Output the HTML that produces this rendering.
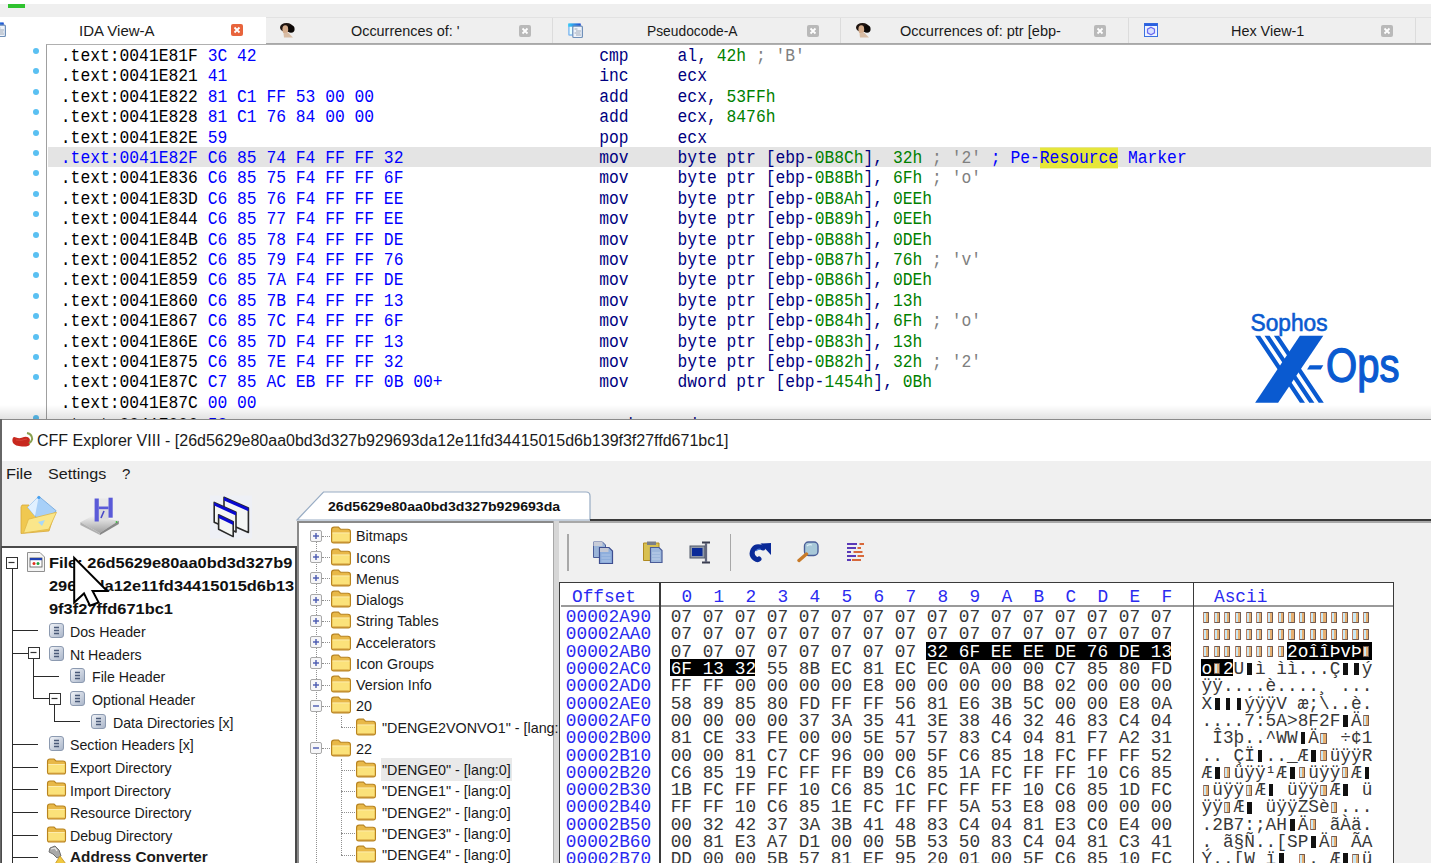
<!DOCTYPE html><html><head><meta charset="utf-8"><style>
*{margin:0;padding:0;box-sizing:border-box}
html,body{width:1431px;height:868px;overflow:hidden;background:#fff}
body{position:relative;font-family:"Liberation Sans",sans-serif;color:#000}
.a{position:absolute}
.ui{font-family:"Liberation Sans",sans-serif;font-size:15px;white-space:pre;line-height:17px}
.mono{font-family:"Liberation Mono",monospace;white-space:pre}
.code{font-size:16.32px;line-height:20.45px;transform:scaleY(1.1);transform-origin:0 15px}
.ad{color:#000}
.by{color:#0000ff}
.mn{color:#000080}
.op{color:#000080}
.nm{color:#008000}
.cm{color:#808080}
.hx{font-size:17.8px;line-height:17.25px}
</style></head><body>
<div class="a" style="left:0;top:4px;width:1431px;height:14px;background:#efefef"></div>
<div class="a" style="left:8px;top:4px;width:17px;height:4px;background:#2fc22f"></div>
<div class="a" style="left:266px;top:17px;width:1165px;height:27px;background:#efefef;border-top:1px solid #e2e2e2"></div>
<div class="a" style="left:0;top:17px;width:266px;height:27px;background:#fff"></div>
<div class="a" style="left:266px;top:43px;width:1165px;height:2px;background:#a8a8a8"></div>
<div class="a" style="left:552px;top:18px;width:1px;height:25px;background:#dcdcdc"></div>
<div class="a" style="left:840px;top:18px;width:1px;height:25px;background:#dcdcdc"></div>
<div class="a" style="left:1128px;top:18px;width:1px;height:25px;background:#dcdcdc"></div>
<div class="a" style="left:1415px;top:18px;width:1px;height:25px;background:#dcdcdc"></div>
<div class="a ui" style="left:79px;top:22px;color:#1a1a1a;transform:scaleX(1.0);transform-origin:0 0">IDA View-A</div>
<div class="a" style="left:231px;top:24px;width:12px;height:12px;border-radius:2px;background:#e8643c"><svg width="12" height="12" style="position:absolute;left:0;top:0"><path d="M3.5 3.5L8.5 8.5M8.5 3.5L3.5 8.5" stroke="#fff" stroke-width="1.8"/></svg></div>
<div class="a ui" style="left:351px;top:22px;color:#1a1a1a;transform:scaleX(0.96);transform-origin:0 0">Occurrences of: '</div>
<div class="a" style="left:519px;top:25px;width:12px;height:12px;border-radius:2px;background:#b9b9b9"><svg width="12" height="12" style="position:absolute;left:0;top:0"><path d="M3.5 3.5L8.5 8.5M8.5 3.5L3.5 8.5" stroke="#fff" stroke-width="1.8"/></svg></div>
<div class="a ui" style="left:647px;top:22px;color:#1a1a1a;transform:scaleX(0.92);transform-origin:0 0">Pseudocode-A</div>
<div class="a" style="left:807px;top:25px;width:12px;height:12px;border-radius:2px;background:#b9b9b9"><svg width="12" height="12" style="position:absolute;left:0;top:0"><path d="M3.5 3.5L8.5 8.5M8.5 3.5L3.5 8.5" stroke="#fff" stroke-width="1.8"/></svg></div>
<div class="a ui" style="left:900px;top:22px;color:#1a1a1a;transform:scaleX(0.97);transform-origin:0 0">Occurrences of: ptr [ebp-</div>
<div class="a" style="left:1094px;top:25px;width:12px;height:12px;border-radius:2px;background:#b9b9b9"><svg width="12" height="12" style="position:absolute;left:0;top:0"><path d="M3.5 3.5L8.5 8.5M8.5 3.5L3.5 8.5" stroke="#fff" stroke-width="1.8"/></svg></div>
<div class="a ui" style="left:1231px;top:22px;color:#1a1a1a;transform:scaleX(0.96);transform-origin:0 0">Hex View-1</div>
<div class="a" style="left:1381px;top:25px;width:12px;height:12px;border-radius:2px;background:#b9b9b9"><svg width="12" height="12" style="position:absolute;left:0;top:0"><path d="M3.5 3.5L8.5 8.5M8.5 3.5L3.5 8.5" stroke="#fff" stroke-width="1.8"/></svg></div>
<svg class="a" style="left:-11px;top:21px" width="18" height="17"><defs><linearGradient id="tg-11" x1="0" x2="1"><stop offset="0" stop-color="#38d0f8"/><stop offset="1" stop-color="#2048d0"/></linearGradient></defs><rect x="2.2" y="1.5" width="12.5" height="12.2" rx="1.2" fill="#80b8f0"/><rect x="2.2" y="1.5" width="12.5" height="3.2" fill="url(#tg-11)"/><rect x="3.6" y="4.8" width="2.6" height="7.5" fill="#e8ffff"/><rect x="6.8" y="4.2" width="9.6" height="11.3" rx="1" fill="#eef3fa" stroke="#7090b8" stroke-width="1.2"/><path d="M8.5 7h3M10 9h5M8.5 11h6M10 13h5" stroke="#a0aab8" stroke-width="1"/></svg>
<svg class="a" style="left:278px;top:21px" width="20" height="17"><ellipse cx="8.5" cy="6.5" rx="6.5" ry="4.6" fill="#1e1410"/><ellipse cx="13" cy="8" rx="3.6" ry="3.8" fill="#0c0806"/><ellipse cx="7.3" cy="8.5" rx="2.9" ry="4.2" fill="#d4ac8c"/><path d="M5.5 12.5 Q8 11 10.5 12 L15 16.5 H6Z" fill="#d8bca4"/></svg>
<svg class="a" style="left:566px;top:22px" width="18" height="17"><defs><linearGradient id="tg566" x1="0" x2="1"><stop offset="0" stop-color="#38d0f8"/><stop offset="1" stop-color="#2048d0"/></linearGradient></defs><rect x="2.2" y="1.5" width="12.5" height="12.2" rx="1.2" fill="#80b8f0"/><rect x="2.2" y="1.5" width="12.5" height="3.2" fill="url(#tg566)"/><rect x="3.6" y="4.8" width="2.6" height="7.5" fill="#e8ffff"/><rect x="6.8" y="4.2" width="9.6" height="11.3" rx="1" fill="#eef3fa" stroke="#7090b8" stroke-width="1.2"/><path d="M8.5 7h3M10 9h5M8.5 11h6M10 13h5" stroke="#a0aab8" stroke-width="1"/></svg>
<svg class="a" style="left:854px;top:21px" width="20" height="17"><ellipse cx="8.5" cy="6.5" rx="6.5" ry="4.6" fill="#1e1410"/><ellipse cx="13" cy="8" rx="3.6" ry="3.8" fill="#0c0806"/><ellipse cx="7.3" cy="8.5" rx="2.9" ry="4.2" fill="#d4ac8c"/><path d="M5.5 12.5 Q8 11 10.5 12 L15 16.5 H6Z" fill="#d8bca4"/></svg>
<svg class="a" style="left:1144px;top:23px" width="14" height="14"><rect x="0.5" y="0.5" width="13" height="13" fill="#eef4ff" stroke="#3a70e0"/><rect x="0.5" y="0.5" width="13" height="2.5" fill="#2a60e0"/><path d="M7 4.2 L10.5 6.2 V9.8 L7 11.8 L3.5 9.8 V6.2Z" fill="#d8e0ff" stroke="#6a6af0" stroke-width="1.2"/></svg>
<div class="a" style="left:46px;top:44px;width:1385px;height:376px;border-left:1.5px solid #a0a0a0;border-top:1px solid #b0b0b0"></div>
<div class="a" style="left:48px;top:146.8px;width:1383px;height:19.8px;background:#e4e4e4"></div>
<div class="a" style="left:33.3px;top:48.00px;width:6px;height:6px;border-radius:50%;background:#5ac0f2"></div>
<div class="a mono code" style="left:60.8px;top:47.00px"><span style="color:#000">.text:0041E81F</span> <span class="by">3C 42</span></div>
<div class="a mono code mn" style="left:599.25px;top:47.00px">cmp</div>
<div class="a mono code" style="left:677.57px;top:47.00px"><span class="op">al, </span><span class="nm">42h</span><span class="cm"> ; 'B'</span></div>
<div class="a" style="left:33.3px;top:68.40px;width:6px;height:6px;border-radius:50%;background:#5ac0f2"></div>
<div class="a mono code" style="left:60.8px;top:67.40px"><span style="color:#000">.text:0041E821</span> <span class="by">41</span></div>
<div class="a mono code mn" style="left:599.25px;top:67.40px">inc</div>
<div class="a mono code" style="left:677.57px;top:67.40px"><span class="op">ecx</span></div>
<div class="a" style="left:33.3px;top:88.80px;width:6px;height:6px;border-radius:50%;background:#5ac0f2"></div>
<div class="a mono code" style="left:60.8px;top:87.80px"><span style="color:#000">.text:0041E822</span> <span class="by">81 C1 FF 53 00 00</span></div>
<div class="a mono code mn" style="left:599.25px;top:87.80px">add</div>
<div class="a mono code" style="left:677.57px;top:87.80px"><span class="op">ecx, </span><span class="nm">53FFh</span></div>
<div class="a" style="left:33.3px;top:109.20px;width:6px;height:6px;border-radius:50%;background:#5ac0f2"></div>
<div class="a mono code" style="left:60.8px;top:108.20px"><span style="color:#000">.text:0041E828</span> <span class="by">81 C1 76 84 00 00</span></div>
<div class="a mono code mn" style="left:599.25px;top:108.20px">add</div>
<div class="a mono code" style="left:677.57px;top:108.20px"><span class="op">ecx, </span><span class="nm">8476h</span></div>
<div class="a" style="left:33.3px;top:129.60px;width:6px;height:6px;border-radius:50%;background:#5ac0f2"></div>
<div class="a mono code" style="left:60.8px;top:128.60px"><span style="color:#000">.text:0041E82E</span> <span class="by">59</span></div>
<div class="a mono code mn" style="left:599.25px;top:128.60px">pop</div>
<div class="a mono code" style="left:677.57px;top:128.60px"><span class="op">ecx</span></div>
<div class="a" style="left:33.3px;top:150.00px;width:6px;height:6px;border-radius:50%;background:#5ac0f2"></div>
<div class="a mono code" style="left:60.8px;top:149.00px"><span style="color:#0000ff">.text:0041E82F</span> <span class="by">C6 85 74 F4 FF FF 32</span></div>
<div class="a mono code mn" style="left:599.25px;top:149.00px">mov</div>
<div class="a mono code" style="left:677.57px;top:149.00px"><span class="op">byte ptr [ebp-</span><span class="nm">0B8Ch</span><span class="op">], </span><span class="nm">32h</span><span class="cm"> ; '2'</span><span class="by"> ; Pe-</span><span style="background:#e6e63a;color:#0000ff">Resource</span><span class="by"> Marker</span></div>
<div class="a" style="left:33.3px;top:170.40px;width:6px;height:6px;border-radius:50%;background:#5ac0f2"></div>
<div class="a mono code" style="left:60.8px;top:169.40px"><span style="color:#000">.text:0041E836</span> <span class="by">C6 85 75 F4 FF FF 6F</span></div>
<div class="a mono code mn" style="left:599.25px;top:169.40px">mov</div>
<div class="a mono code" style="left:677.57px;top:169.40px"><span class="op">byte ptr [ebp-</span><span class="nm">0B8Bh</span><span class="op">], </span><span class="nm">6Fh</span><span class="cm"> ; 'o'</span></div>
<div class="a" style="left:33.3px;top:190.80px;width:6px;height:6px;border-radius:50%;background:#5ac0f2"></div>
<div class="a mono code" style="left:60.8px;top:189.80px"><span style="color:#000">.text:0041E83D</span> <span class="by">C6 85 76 F4 FF FF EE</span></div>
<div class="a mono code mn" style="left:599.25px;top:189.80px">mov</div>
<div class="a mono code" style="left:677.57px;top:189.80px"><span class="op">byte ptr [ebp-</span><span class="nm">0B8Ah</span><span class="op">], </span><span class="nm">0EEh</span></div>
<div class="a" style="left:33.3px;top:211.20px;width:6px;height:6px;border-radius:50%;background:#5ac0f2"></div>
<div class="a mono code" style="left:60.8px;top:210.20px"><span style="color:#000">.text:0041E844</span> <span class="by">C6 85 77 F4 FF FF EE</span></div>
<div class="a mono code mn" style="left:599.25px;top:210.20px">mov</div>
<div class="a mono code" style="left:677.57px;top:210.20px"><span class="op">byte ptr [ebp-</span><span class="nm">0B89h</span><span class="op">], </span><span class="nm">0EEh</span></div>
<div class="a" style="left:33.3px;top:231.60px;width:6px;height:6px;border-radius:50%;background:#5ac0f2"></div>
<div class="a mono code" style="left:60.8px;top:230.60px"><span style="color:#000">.text:0041E84B</span> <span class="by">C6 85 78 F4 FF FF DE</span></div>
<div class="a mono code mn" style="left:599.25px;top:230.60px">mov</div>
<div class="a mono code" style="left:677.57px;top:230.60px"><span class="op">byte ptr [ebp-</span><span class="nm">0B88h</span><span class="op">], </span><span class="nm">0DEh</span></div>
<div class="a" style="left:33.3px;top:252.00px;width:6px;height:6px;border-radius:50%;background:#5ac0f2"></div>
<div class="a mono code" style="left:60.8px;top:251.00px"><span style="color:#000">.text:0041E852</span> <span class="by">C6 85 79 F4 FF FF 76</span></div>
<div class="a mono code mn" style="left:599.25px;top:251.00px">mov</div>
<div class="a mono code" style="left:677.57px;top:251.00px"><span class="op">byte ptr [ebp-</span><span class="nm">0B87h</span><span class="op">], </span><span class="nm">76h</span><span class="cm"> ; 'v'</span></div>
<div class="a" style="left:33.3px;top:272.40px;width:6px;height:6px;border-radius:50%;background:#5ac0f2"></div>
<div class="a mono code" style="left:60.8px;top:271.40px"><span style="color:#000">.text:0041E859</span> <span class="by">C6 85 7A F4 FF FF DE</span></div>
<div class="a mono code mn" style="left:599.25px;top:271.40px">mov</div>
<div class="a mono code" style="left:677.57px;top:271.40px"><span class="op">byte ptr [ebp-</span><span class="nm">0B86h</span><span class="op">], </span><span class="nm">0DEh</span></div>
<div class="a" style="left:33.3px;top:292.80px;width:6px;height:6px;border-radius:50%;background:#5ac0f2"></div>
<div class="a mono code" style="left:60.8px;top:291.80px"><span style="color:#000">.text:0041E860</span> <span class="by">C6 85 7B F4 FF FF 13</span></div>
<div class="a mono code mn" style="left:599.25px;top:291.80px">mov</div>
<div class="a mono code" style="left:677.57px;top:291.80px"><span class="op">byte ptr [ebp-</span><span class="nm">0B85h</span><span class="op">], </span><span class="nm">13h</span></div>
<div class="a" style="left:33.3px;top:313.20px;width:6px;height:6px;border-radius:50%;background:#5ac0f2"></div>
<div class="a mono code" style="left:60.8px;top:312.20px"><span style="color:#000">.text:0041E867</span> <span class="by">C6 85 7C F4 FF FF 6F</span></div>
<div class="a mono code mn" style="left:599.25px;top:312.20px">mov</div>
<div class="a mono code" style="left:677.57px;top:312.20px"><span class="op">byte ptr [ebp-</span><span class="nm">0B84h</span><span class="op">], </span><span class="nm">6Fh</span><span class="cm"> ; 'o'</span></div>
<div class="a" style="left:33.3px;top:333.60px;width:6px;height:6px;border-radius:50%;background:#5ac0f2"></div>
<div class="a mono code" style="left:60.8px;top:332.60px"><span style="color:#000">.text:0041E86E</span> <span class="by">C6 85 7D F4 FF FF 13</span></div>
<div class="a mono code mn" style="left:599.25px;top:332.60px">mov</div>
<div class="a mono code" style="left:677.57px;top:332.60px"><span class="op">byte ptr [ebp-</span><span class="nm">0B83h</span><span class="op">], </span><span class="nm">13h</span></div>
<div class="a" style="left:33.3px;top:354.00px;width:6px;height:6px;border-radius:50%;background:#5ac0f2"></div>
<div class="a mono code" style="left:60.8px;top:353.00px"><span style="color:#000">.text:0041E875</span> <span class="by">C6 85 7E F4 FF FF 32</span></div>
<div class="a mono code mn" style="left:599.25px;top:353.00px">mov</div>
<div class="a mono code" style="left:677.57px;top:353.00px"><span class="op">byte ptr [ebp-</span><span class="nm">0B82h</span><span class="op">], </span><span class="nm">32h</span><span class="cm"> ; '2'</span></div>
<div class="a" style="left:33.3px;top:374.40px;width:6px;height:6px;border-radius:50%;background:#5ac0f2"></div>
<div class="a mono code" style="left:60.8px;top:373.40px"><span style="color:#000">.text:0041E87C</span> <span class="by">C7 85 AC EB FF FF 0B 00+</span></div>
<div class="a mono code mn" style="left:599.25px;top:373.40px">mov</div>
<div class="a mono code" style="left:677.57px;top:373.40px"><span class="op">dword ptr [ebp-</span><span class="nm">1454h</span><span class="op">], </span><span class="nm">0Bh</span></div>
<div class="a mono code" style="left:60.8px;top:393.80px"><span style="color:#000">.text:0041E87C</span> <span class="by">00 00</span></div>
<div class="a" style="left:33.3px;top:415.20px;width:6px;height:6px;border-radius:50%;background:#5ac0f2"></div>
<div class="a mono code" style="left:60.8px;top:415.70px"><span style="color:#000">.text:0041E886</span> <span class="by">53</span></div>
<div class="a mono code mn" style="left:599.25px;top:415.70px">push</div>
<div class="a mono code" style="left:677.57px;top:415.70px"><span class="op">edx</span></div>
<div class="a" style="left:0;top:405px;width:1431px;height:14.5px;background:linear-gradient(to bottom,rgba(0,0,0,0),rgba(0,0,0,0.12))"></div>
<div class="a" style="left:0;top:419px;width:1431px;height:444px;background:#fff;border-top:1px solid #8a8a8a"></div>
<div class="a" style="left:0;top:419px;width:1.5px;height:444px;background:#666"></div>
<svg class="a" style="left:10px;top:430px" width="24" height="20"><path d="M2.5 9 Q3 6 6 7.5 Q10 9 14 7 Q18 6 19.8 9 L19.8 14.5 Q18.5 17 12 16.5 Q5 16 3 13 Q2 11 2.5 9Z" fill="#c8281e"/><path d="M6 10 Q11 11 17 9" stroke="#e05a4a" stroke-width="1" fill="none" opacity="0.6"/><path d="M17 3 Q22 4 22.2 9 Q21.5 12 19 13.5" stroke="#8aa050" stroke-width="2" fill="none"/></svg>
<div class="a ui" style="left:37px;top:431px;font-size:16px;color:#1a1a1a;line-height:19px">CFF Explorer VIII - [26d5629e80aa0bd3d327b929693da12e11fd34415015d6b139f3f27ffd671bc1]</div>
<div class="a" style="left:1.5px;top:461px;width:1430px;height:402px;background:#f0f0f0"></div>
<div class="a ui" style="left:6px;top:465px;color:#1a1a1a;transform:scaleX(1.09);transform-origin:0 0">File</div>
<div class="a ui" style="left:48px;top:465px;color:#1a1a1a;display:inline-block;transform:scaleX(1.075);transform-origin:0 0">Settings</div>
<div class="a ui" style="left:122px;top:465px;color:#1a1a1a">?</div>
<svg class="a" style="left:19px;top:494px" width="40" height="42"><path d="M2 13 L2 39.5 L30 37 L36 18 L12 14 L10 11 L3 11Z" fill="#f0c850" stroke="#d8a838" stroke-width="0.8"/><path d="M19.8 2.2 L37.2 16.8 L22.9 29.8 L8.7 13.3Z" fill="#a8d0f8" stroke="#80b0e0"/><path d="M19.8 2.2 L8.7 13.3 L16 22Z" fill="#e0f0ff"/><circle cx="19.8" cy="3.5" r="1.6" fill="#48a0f0"/><path d="M4.5 39 L9.5 25.2 L37.5 18.3 L29.8 35.2Z" fill="#fae68a" stroke="#e0b848" stroke-width="0.8"/><path d="M19 28 L26 26 L23 32Z" fill="#a8d8f8"/></svg>
<svg class="a" style="left:79px;top:496px" width="42" height="40"><defs><linearGradient id="dg" x1="0" y1="0" x2="0" y2="1"><stop offset="0" stop-color="#f0f0f0"/><stop offset="1" stop-color="#a0a0a0"/></linearGradient></defs><path d="M1.4 26.3 L13 20 L39.8 24.8 L20.6 37Z" fill="url(#dg)"/><path d="M20.6 37 L39.8 24.8 L39.8 28 L21 39Z" fill="#888"/><path d="M1.4 26.3 L1.4 29 L21 39 L20.6 37Z" fill="#b0b0b0"/><rect x="19.8" y="2.5" width="9.7" height="8" fill="#e8e8e8"/><rect x="19.8" y="13.2" width="9.7" height="10" fill="#dcdcdc"/><path d="M22 22 L25 15" stroke="#4848c8" stroke-width="1.6"/><rect x="15.6" y="2.5" width="4.2" height="23" fill="#5a5ad8"/><rect x="29.5" y="1.7" width="4.2" height="20" fill="#5a5ad8"/><rect x="19.8" y="10.5" width="9.7" height="2.7" fill="#5a5ad8"/><circle cx="37.5" cy="26" r="0.9" fill="#40c040"/></svg>
<svg class="a" style="left:210px;top:495px" width="42" height="44"><rect x="0" y="0.5" width="42" height="43" fill="#eef0f6"/><path d="M14 2.3 L38.4 13 L38.4 37.5 L14 26.7Z" fill="#f4f6f4" stroke="#2a2a2a" stroke-width="1.6" stroke-linejoin="round"/><path d="M14 2.3 L38.4 13 L38.4 16.2 L14 5.5Z" fill="#0a0ad0"/><path d="M4.2 7.4 L26 17.2 L26 37.1 L4.2 27.3Z" fill="#f4f6f4" stroke="#2a2a2a" stroke-width="1.6" stroke-linejoin="round"/><path d="M4.2 7.4 L26 17.2 L26 20.4 L4.2 10.600000000000001Z" fill="#0a0ad0"/><path d="M8.6 19.7 L23.2 26.7 L23.2 41.6 L8.6 34.3Z" fill="#f4f6f4" stroke="#2a2a2a" stroke-width="1.6" stroke-linejoin="round"/><path d="M8.6 19.7 L23.2 26.7 L23.2 29.9 L8.6 22.9Z" fill="#0a0ad0"/></svg>
<div class="a" style="left:1px;top:545.5px;width:296px;height:318px;background:#fff;border-top:2px solid #4a4a4a;border-right:2px solid #4a4a4a;border-left:1.5px solid #4a4a4a"></div>
<svg class="a" style="left:6px;top:557px" width="12" height="12"><rect x="0.5" y="0.5" width="11" height="11" fill="#fff" stroke="#333"/><path d="M2.5 5.5h6" stroke="#333" stroke-width="1.2"/></svg>
<svg class="a" style="left:26px;top:551px" width="20" height="22"><path d="M1.5 1.5 H14 L18.5 6 V20.5 H1.5Z" fill="#f4f4f4" stroke="#909090"/><rect x="4" y="7" width="12" height="9" fill="#fff" stroke="#555" stroke-width="0.8"/><rect x="4" y="7" width="12" height="2.2" fill="#2040b0"/><circle cx="8" cy="12.5" r="1.5" fill="#e03020"/><circle cx="12" cy="12.5" r="1.5" fill="#20a040"/></svg>
<div class="a" style="left:0;top:547px;width:294px;height:80px;overflow:hidden">
<div class="a ui" style="left:49px;top:7.3px;font-weight:bold;color:#101010;transform:scaleX(1.093);transform-origin:0 0">File: 26d5629e80aa0bd3d327b9</div>
<div class="a ui" style="left:49px;top:30.0px;font-weight:bold;color:#101010;transform:scaleX(1.093);transform-origin:0 0">29693da12e11fd34415015d6b13</div>
<div class="a ui" style="left:49px;top:52.7px;font-weight:bold;color:#101010;transform:scaleX(1.093);transform-origin:0 0">9f3f27ffd671bc1</div>
</div>
<svg class="a" style="left:70px;top:554px;z-index:5" width="42" height="56"><path d="M4.2 3.9 V48.4 L14 39.4 L20 51.8 L28.6 48.4 L22.6 37 H37.2Z" fill="#fff" stroke="#000" stroke-width="2" stroke-linejoin="miter"/></svg>
<div class="a" style="left:12px;top:568px;width:1px;height:295px;background:#2a2a2a"></div>
<div class="a" style="left:12px;top:630px;width:26px;height:1px;background:#2a2a2a"></div>
<svg class="a" style="left:48.5px;top:622.9px" width="15" height="15"><defs><linearGradient id="hg" x1="0" y1="0" x2="1" y2="1"><stop offset="0" stop-color="#f4f6fa"/><stop offset="1" stop-color="#a8b4c8"/></linearGradient></defs><rect x="0.5" y="0.5" width="14" height="14" rx="2.5" fill="url(#hg)" stroke="#8c9ab0"/><path d="M5 4.5h5M5 7.5h5M5 10.5h5" stroke="#4a5a78" stroke-width="1.3"/></svg>
<div class="a ui" style="left:70.0px;top:622.8px;color:#1a1a1a;transform:scaleX(0.945);transform-origin:0 0">Dos Header</div>
<div class="a" style="left:12px;top:653px;width:16px;height:1px;background:#2a2a2a"></div>
<svg class="a" style="left:27.5px;top:647.3000000000001px" width="12" height="12"><rect x="0.5" y="0.5" width="11" height="11" fill="#fff" stroke="#333"/><path d="M2.5 5.5h6" stroke="#333" stroke-width="1.2"/></svg>
<svg class="a" style="left:48.5px;top:645.6px" width="15" height="15"><defs><linearGradient id="hg" x1="0" y1="0" x2="1" y2="1"><stop offset="0" stop-color="#f4f6fa"/><stop offset="1" stop-color="#a8b4c8"/></linearGradient></defs><rect x="0.5" y="0.5" width="14" height="14" rx="2.5" fill="url(#hg)" stroke="#8c9ab0"/><path d="M5 4.5h5M5 7.5h5M5 10.5h5" stroke="#4a5a78" stroke-width="1.3"/></svg>
<div class="a ui" style="left:70.0px;top:645.5px;color:#1a1a1a;transform:scaleX(0.945);transform-origin:0 0">Nt Headers</div>
<div class="a" style="left:33px;top:676px;width:26px;height:1px;background:#2a2a2a"></div>
<svg class="a" style="left:69.5px;top:668.3px" width="15" height="15"><defs><linearGradient id="hg" x1="0" y1="0" x2="1" y2="1"><stop offset="0" stop-color="#f4f6fa"/><stop offset="1" stop-color="#a8b4c8"/></linearGradient></defs><rect x="0.5" y="0.5" width="14" height="14" rx="2.5" fill="url(#hg)" stroke="#8c9ab0"/><path d="M5 4.5h5M5 7.5h5M5 10.5h5" stroke="#4a5a78" stroke-width="1.3"/></svg>
<div class="a ui" style="left:91.5px;top:668.2px;color:#1a1a1a;transform:scaleX(0.945);transform-origin:0 0">File Header</div>
<div class="a" style="left:33px;top:698px;width:16px;height:1px;background:#2a2a2a"></div>
<svg class="a" style="left:48.5px;top:692.7px" width="12" height="12"><rect x="0.5" y="0.5" width="11" height="11" fill="#fff" stroke="#333"/><path d="M2.5 5.5h6" stroke="#333" stroke-width="1.2"/></svg>
<svg class="a" style="left:69.5px;top:691.0px" width="15" height="15"><defs><linearGradient id="hg" x1="0" y1="0" x2="1" y2="1"><stop offset="0" stop-color="#f4f6fa"/><stop offset="1" stop-color="#a8b4c8"/></linearGradient></defs><rect x="0.5" y="0.5" width="14" height="14" rx="2.5" fill="url(#hg)" stroke="#8c9ab0"/><path d="M5 4.5h5M5 7.5h5M5 10.5h5" stroke="#4a5a78" stroke-width="1.3"/></svg>
<div class="a ui" style="left:91.5px;top:690.9px;color:#1a1a1a;transform:scaleX(0.945);transform-origin:0 0">Optional Header</div>
<div class="a" style="left:54px;top:721px;width:26px;height:1px;background:#2a2a2a"></div>
<svg class="a" style="left:90.5px;top:713.6999999999999px" width="15" height="15"><defs><linearGradient id="hg" x1="0" y1="0" x2="1" y2="1"><stop offset="0" stop-color="#f4f6fa"/><stop offset="1" stop-color="#a8b4c8"/></linearGradient></defs><rect x="0.5" y="0.5" width="14" height="14" rx="2.5" fill="url(#hg)" stroke="#8c9ab0"/><path d="M5 4.5h5M5 7.5h5M5 10.5h5" stroke="#4a5a78" stroke-width="1.3"/></svg>
<div class="a ui" style="left:113.0px;top:713.6px;color:#1a1a1a;transform:scaleX(0.945);transform-origin:0 0">Data Directories [x]</div>
<div class="a" style="left:12px;top:744px;width:26px;height:1px;background:#2a2a2a"></div>
<svg class="a" style="left:48.5px;top:736.4px" width="15" height="15"><defs><linearGradient id="hg" x1="0" y1="0" x2="1" y2="1"><stop offset="0" stop-color="#f4f6fa"/><stop offset="1" stop-color="#a8b4c8"/></linearGradient></defs><rect x="0.5" y="0.5" width="14" height="14" rx="2.5" fill="url(#hg)" stroke="#8c9ab0"/><path d="M5 4.5h5M5 7.5h5M5 10.5h5" stroke="#4a5a78" stroke-width="1.3"/></svg>
<div class="a ui" style="left:70.0px;top:736.3px;color:#1a1a1a;transform:scaleX(0.945);transform-origin:0 0">Section Headers [x]</div>
<div class="a" style="left:12px;top:767px;width:26px;height:1px;background:#2a2a2a"></div>
<svg class="a" style="left:46.0px;top:757.5999999999999px" width="21" height="17" viewBox="0 0 21 17"><path d="M1.5 3.5 Q1.5 1 4 1 L8 1 L10 3 L17 3 Q19.5 3 19.5 5.5 L19.5 14 Q19.5 16 17.5 16 L3.5 16 Q1.5 16 1.5 14Z" fill="#e8b848" stroke="#b88420" stroke-width="1.1"/><path d="M2.3 6.5 L18.7 6.5 L18.7 14 Q18.7 15.2 17.5 15.2 L3.5 15.2 Q2.3 15.2 2.3 14Z" fill="#fbe27a"/><path d="M2.3 6.5 L18.7 6.5" stroke="#fff4c0" stroke-width="0.8"/><path d="M3 15.2 H18" stroke="#c89030" stroke-width="0.9"/></svg>
<div class="a ui" style="left:70.0px;top:759.0px;color:#1a1a1a;transform:scaleX(0.945);transform-origin:0 0">Export Directory</div>
<div class="a" style="left:12px;top:789px;width:26px;height:1px;background:#2a2a2a"></div>
<svg class="a" style="left:46.0px;top:780.3px" width="21" height="17" viewBox="0 0 21 17"><path d="M1.5 3.5 Q1.5 1 4 1 L8 1 L10 3 L17 3 Q19.5 3 19.5 5.5 L19.5 14 Q19.5 16 17.5 16 L3.5 16 Q1.5 16 1.5 14Z" fill="#e8b848" stroke="#b88420" stroke-width="1.1"/><path d="M2.3 6.5 L18.7 6.5 L18.7 14 Q18.7 15.2 17.5 15.2 L3.5 15.2 Q2.3 15.2 2.3 14Z" fill="#fbe27a"/><path d="M2.3 6.5 L18.7 6.5" stroke="#fff4c0" stroke-width="0.8"/><path d="M3 15.2 H18" stroke="#c89030" stroke-width="0.9"/></svg>
<div class="a ui" style="left:70.0px;top:781.7px;color:#1a1a1a;transform:scaleX(0.945);transform-origin:0 0">Import Directory</div>
<div class="a" style="left:12px;top:812px;width:26px;height:1px;background:#2a2a2a"></div>
<svg class="a" style="left:46.0px;top:803.0px" width="21" height="17" viewBox="0 0 21 17"><path d="M1.5 3.5 Q1.5 1 4 1 L8 1 L10 3 L17 3 Q19.5 3 19.5 5.5 L19.5 14 Q19.5 16 17.5 16 L3.5 16 Q1.5 16 1.5 14Z" fill="#e8b848" stroke="#b88420" stroke-width="1.1"/><path d="M2.3 6.5 L18.7 6.5 L18.7 14 Q18.7 15.2 17.5 15.2 L3.5 15.2 Q2.3 15.2 2.3 14Z" fill="#fbe27a"/><path d="M2.3 6.5 L18.7 6.5" stroke="#fff4c0" stroke-width="0.8"/><path d="M3 15.2 H18" stroke="#c89030" stroke-width="0.9"/></svg>
<div class="a ui" style="left:70.0px;top:804.4px;color:#1a1a1a;transform:scaleX(0.945);transform-origin:0 0">Resource Directory</div>
<div class="a" style="left:12px;top:835px;width:26px;height:1px;background:#2a2a2a"></div>
<svg class="a" style="left:46.0px;top:825.6999999999999px" width="21" height="17" viewBox="0 0 21 17"><path d="M1.5 3.5 Q1.5 1 4 1 L8 1 L10 3 L17 3 Q19.5 3 19.5 5.5 L19.5 14 Q19.5 16 17.5 16 L3.5 16 Q1.5 16 1.5 14Z" fill="#e8b848" stroke="#b88420" stroke-width="1.1"/><path d="M2.3 6.5 L18.7 6.5 L18.7 14 Q18.7 15.2 17.5 15.2 L3.5 15.2 Q2.3 15.2 2.3 14Z" fill="#fbe27a"/><path d="M2.3 6.5 L18.7 6.5" stroke="#fff4c0" stroke-width="0.8"/><path d="M3 15.2 H18" stroke="#c89030" stroke-width="0.9"/></svg>
<div class="a ui" style="left:70.0px;top:827.1px;color:#1a1a1a;transform:scaleX(0.945);transform-origin:0 0">Debug Directory</div>
<div class="a" style="left:12px;top:857px;width:26px;height:1px;background:#2a2a2a"></div>
<svg class="a" style="left:45.5px;top:845.4px" width="22" height="20"><path d="M4 3 L9 1 L13 5 L15 11 L11 13 L7 9 L3 7Z" fill="#a8a8a8" stroke="#707070" stroke-width="1"/><path d="M5 4 L9 3 L11 6" stroke="#e8e8e8" stroke-width="1.2" fill="none"/><path d="M9 19 L14 11 L20 19Z" fill="#f0c840" stroke="#c09020" stroke-width="0.8"/></svg>
<div class="a ui" style="left:70.0px;top:847.8px;color:#1a1a1a;font-weight:bold;transform:scaleX(1.02);transform-origin:0 0">Address Converter</div>
<div class="a" style="left:33px;top:659px;width:1px;height:39px;background:#2a2a2a"></div>
<div class="a" style="left:54px;top:704px;width:1px;height:17px;background:#2a2a2a"></div>
<svg class="a" style="left:296px;top:491px" width="300" height="32"><path d="M1 29 L27.5 1 H290 Q294 1 294 5 V29Z" fill="#fff" stroke="#98acc4" stroke-width="1.2"/></svg>
<div class="a ui" style="left:327.5px;top:498.5px;font-size:12.6px;font-weight:bold;color:#101010;transform:scaleX(1.12);transform-origin:0 0">26d5629e80aa0bd3d327b929693da</div>
<div class="a" style="left:590px;top:518.5px;width:841px;height:2px;background:#3a3a3a"></div>
<div class="a" style="left:553px;top:520.5px;width:878px;height:2px;background:#a8a8a8"></div>
<div class="a" style="left:297px;top:521px;width:256.5px;height:342px;background:#fff;border-top:2px solid #8a8a8a;border-left:2px solid #8a8a8a"></div>
<div class="a" style="left:553px;top:521px;width:6px;height:342px;background:#d6d6d6;border-left:1px solid #a8a8a8"></div>
<div class="a" style="left:315.5px;top:542px;width:0;height:321px;border-left:1px dotted #909090"></div>
<div class="a" style="left:341px;top:716px;width:0;height:11px;border-left:1px dotted #909090"></div>
<div class="a" style="left:341px;top:759px;width:0;height:96px;border-left:1px dotted #909090"></div>
<div class="a" style="left:381px;top:758px;width:131px;height:22.7px;background:#e9e9e9"></div>
<svg class="a" style="left:310px;top:529.8px" width="12" height="12"><rect x="0.5" y="0.5" width="11" height="11" rx="1.5" fill="#f6f6f8" stroke="#a8a8a8"/><path d="M3 6h6" stroke="#4a5ab0" stroke-width="1.4"/><path d="M6 3v6" stroke="#4a5ab0" stroke-width="1.4"/></svg>
<div class="a" style="left:322px;top:535.8px;width:8px;height:0;border-top:1px dotted #909090"></div>
<svg class="a" style="left:329.5px;top:526.3px" width="22" height="18" viewBox="0 0 21 17"><path d="M1.5 3.5 Q1.5 1 4 1 L8 1 L10 3 L17 3 Q19.5 3 19.5 5.5 L19.5 14 Q19.5 16 17.5 16 L3.5 16 Q1.5 16 1.5 14Z" fill="#e8b848" stroke="#b88420" stroke-width="1.1"/><path d="M2.3 6.5 L18.7 6.5 L18.7 14 Q18.7 15.2 17.5 15.2 L3.5 15.2 Q2.3 15.2 2.3 14Z" fill="#fbe27a"/><path d="M2.3 6.5 L18.7 6.5" stroke="#fff4c0" stroke-width="0.8"/><path d="M3 15.2 H18" stroke="#c89030" stroke-width="0.9"/></svg>
<div class="a ui" style="left:356px;top:527.4px;color:#1a1a1a;transform:scaleX(0.955);transform-origin:0 0">Bitmaps</div>
<svg class="a" style="left:310px;top:551.05px" width="12" height="12"><rect x="0.5" y="0.5" width="11" height="11" rx="1.5" fill="#f6f6f8" stroke="#a8a8a8"/><path d="M3 6h6" stroke="#4a5ab0" stroke-width="1.4"/><path d="M6 3v6" stroke="#4a5ab0" stroke-width="1.4"/></svg>
<div class="a" style="left:322px;top:557.0px;width:8px;height:0;border-top:1px dotted #909090"></div>
<svg class="a" style="left:329.5px;top:547.55px" width="22" height="18" viewBox="0 0 21 17"><path d="M1.5 3.5 Q1.5 1 4 1 L8 1 L10 3 L17 3 Q19.5 3 19.5 5.5 L19.5 14 Q19.5 16 17.5 16 L3.5 16 Q1.5 16 1.5 14Z" fill="#e8b848" stroke="#b88420" stroke-width="1.1"/><path d="M2.3 6.5 L18.7 6.5 L18.7 14 Q18.7 15.2 17.5 15.2 L3.5 15.2 Q2.3 15.2 2.3 14Z" fill="#fbe27a"/><path d="M2.3 6.5 L18.7 6.5" stroke="#fff4c0" stroke-width="0.8"/><path d="M3 15.2 H18" stroke="#c89030" stroke-width="0.9"/></svg>
<div class="a ui" style="left:356px;top:548.6px;color:#1a1a1a;transform:scaleX(0.955);transform-origin:0 0">Icons</div>
<svg class="a" style="left:310px;top:572.3px" width="12" height="12"><rect x="0.5" y="0.5" width="11" height="11" rx="1.5" fill="#f6f6f8" stroke="#a8a8a8"/><path d="M3 6h6" stroke="#4a5ab0" stroke-width="1.4"/><path d="M6 3v6" stroke="#4a5ab0" stroke-width="1.4"/></svg>
<div class="a" style="left:322px;top:578.3px;width:8px;height:0;border-top:1px dotted #909090"></div>
<svg class="a" style="left:329.5px;top:568.8px" width="22" height="18" viewBox="0 0 21 17"><path d="M1.5 3.5 Q1.5 1 4 1 L8 1 L10 3 L17 3 Q19.5 3 19.5 5.5 L19.5 14 Q19.5 16 17.5 16 L3.5 16 Q1.5 16 1.5 14Z" fill="#e8b848" stroke="#b88420" stroke-width="1.1"/><path d="M2.3 6.5 L18.7 6.5 L18.7 14 Q18.7 15.2 17.5 15.2 L3.5 15.2 Q2.3 15.2 2.3 14Z" fill="#fbe27a"/><path d="M2.3 6.5 L18.7 6.5" stroke="#fff4c0" stroke-width="0.8"/><path d="M3 15.2 H18" stroke="#c89030" stroke-width="0.9"/></svg>
<div class="a ui" style="left:356px;top:569.9px;color:#1a1a1a;transform:scaleX(0.955);transform-origin:0 0">Menus</div>
<svg class="a" style="left:310px;top:593.55px" width="12" height="12"><rect x="0.5" y="0.5" width="11" height="11" rx="1.5" fill="#f6f6f8" stroke="#a8a8a8"/><path d="M3 6h6" stroke="#4a5ab0" stroke-width="1.4"/><path d="M6 3v6" stroke="#4a5ab0" stroke-width="1.4"/></svg>
<div class="a" style="left:322px;top:599.5px;width:8px;height:0;border-top:1px dotted #909090"></div>
<svg class="a" style="left:329.5px;top:590.05px" width="22" height="18" viewBox="0 0 21 17"><path d="M1.5 3.5 Q1.5 1 4 1 L8 1 L10 3 L17 3 Q19.5 3 19.5 5.5 L19.5 14 Q19.5 16 17.5 16 L3.5 16 Q1.5 16 1.5 14Z" fill="#e8b848" stroke="#b88420" stroke-width="1.1"/><path d="M2.3 6.5 L18.7 6.5 L18.7 14 Q18.7 15.2 17.5 15.2 L3.5 15.2 Q2.3 15.2 2.3 14Z" fill="#fbe27a"/><path d="M2.3 6.5 L18.7 6.5" stroke="#fff4c0" stroke-width="0.8"/><path d="M3 15.2 H18" stroke="#c89030" stroke-width="0.9"/></svg>
<div class="a ui" style="left:356px;top:591.1px;color:#1a1a1a;transform:scaleX(0.955);transform-origin:0 0">Dialogs</div>
<svg class="a" style="left:310px;top:614.8px" width="12" height="12"><rect x="0.5" y="0.5" width="11" height="11" rx="1.5" fill="#f6f6f8" stroke="#a8a8a8"/><path d="M3 6h6" stroke="#4a5ab0" stroke-width="1.4"/><path d="M6 3v6" stroke="#4a5ab0" stroke-width="1.4"/></svg>
<div class="a" style="left:322px;top:620.8px;width:8px;height:0;border-top:1px dotted #909090"></div>
<svg class="a" style="left:329.5px;top:611.3px" width="22" height="18" viewBox="0 0 21 17"><path d="M1.5 3.5 Q1.5 1 4 1 L8 1 L10 3 L17 3 Q19.5 3 19.5 5.5 L19.5 14 Q19.5 16 17.5 16 L3.5 16 Q1.5 16 1.5 14Z" fill="#e8b848" stroke="#b88420" stroke-width="1.1"/><path d="M2.3 6.5 L18.7 6.5 L18.7 14 Q18.7 15.2 17.5 15.2 L3.5 15.2 Q2.3 15.2 2.3 14Z" fill="#fbe27a"/><path d="M2.3 6.5 L18.7 6.5" stroke="#fff4c0" stroke-width="0.8"/><path d="M3 15.2 H18" stroke="#c89030" stroke-width="0.9"/></svg>
<div class="a ui" style="left:356px;top:612.4px;color:#1a1a1a;transform:scaleX(0.955);transform-origin:0 0">String Tables</div>
<svg class="a" style="left:310px;top:636.05px" width="12" height="12"><rect x="0.5" y="0.5" width="11" height="11" rx="1.5" fill="#f6f6f8" stroke="#a8a8a8"/><path d="M3 6h6" stroke="#4a5ab0" stroke-width="1.4"/><path d="M6 3v6" stroke="#4a5ab0" stroke-width="1.4"/></svg>
<div class="a" style="left:322px;top:642.0px;width:8px;height:0;border-top:1px dotted #909090"></div>
<svg class="a" style="left:329.5px;top:632.55px" width="22" height="18" viewBox="0 0 21 17"><path d="M1.5 3.5 Q1.5 1 4 1 L8 1 L10 3 L17 3 Q19.5 3 19.5 5.5 L19.5 14 Q19.5 16 17.5 16 L3.5 16 Q1.5 16 1.5 14Z" fill="#e8b848" stroke="#b88420" stroke-width="1.1"/><path d="M2.3 6.5 L18.7 6.5 L18.7 14 Q18.7 15.2 17.5 15.2 L3.5 15.2 Q2.3 15.2 2.3 14Z" fill="#fbe27a"/><path d="M2.3 6.5 L18.7 6.5" stroke="#fff4c0" stroke-width="0.8"/><path d="M3 15.2 H18" stroke="#c89030" stroke-width="0.9"/></svg>
<div class="a ui" style="left:356px;top:633.6px;color:#1a1a1a;transform:scaleX(0.955);transform-origin:0 0">Accelerators</div>
<svg class="a" style="left:310px;top:657.3px" width="12" height="12"><rect x="0.5" y="0.5" width="11" height="11" rx="1.5" fill="#f6f6f8" stroke="#a8a8a8"/><path d="M3 6h6" stroke="#4a5ab0" stroke-width="1.4"/><path d="M6 3v6" stroke="#4a5ab0" stroke-width="1.4"/></svg>
<div class="a" style="left:322px;top:663.3px;width:8px;height:0;border-top:1px dotted #909090"></div>
<svg class="a" style="left:329.5px;top:653.8px" width="22" height="18" viewBox="0 0 21 17"><path d="M1.5 3.5 Q1.5 1 4 1 L8 1 L10 3 L17 3 Q19.5 3 19.5 5.5 L19.5 14 Q19.5 16 17.5 16 L3.5 16 Q1.5 16 1.5 14Z" fill="#e8b848" stroke="#b88420" stroke-width="1.1"/><path d="M2.3 6.5 L18.7 6.5 L18.7 14 Q18.7 15.2 17.5 15.2 L3.5 15.2 Q2.3 15.2 2.3 14Z" fill="#fbe27a"/><path d="M2.3 6.5 L18.7 6.5" stroke="#fff4c0" stroke-width="0.8"/><path d="M3 15.2 H18" stroke="#c89030" stroke-width="0.9"/></svg>
<div class="a ui" style="left:356px;top:654.9px;color:#1a1a1a;transform:scaleX(0.955);transform-origin:0 0">Icon Groups</div>
<svg class="a" style="left:310px;top:678.55px" width="12" height="12"><rect x="0.5" y="0.5" width="11" height="11" rx="1.5" fill="#f6f6f8" stroke="#a8a8a8"/><path d="M3 6h6" stroke="#4a5ab0" stroke-width="1.4"/><path d="M6 3v6" stroke="#4a5ab0" stroke-width="1.4"/></svg>
<div class="a" style="left:322px;top:684.5px;width:8px;height:0;border-top:1px dotted #909090"></div>
<svg class="a" style="left:329.5px;top:675.05px" width="22" height="18" viewBox="0 0 21 17"><path d="M1.5 3.5 Q1.5 1 4 1 L8 1 L10 3 L17 3 Q19.5 3 19.5 5.5 L19.5 14 Q19.5 16 17.5 16 L3.5 16 Q1.5 16 1.5 14Z" fill="#e8b848" stroke="#b88420" stroke-width="1.1"/><path d="M2.3 6.5 L18.7 6.5 L18.7 14 Q18.7 15.2 17.5 15.2 L3.5 15.2 Q2.3 15.2 2.3 14Z" fill="#fbe27a"/><path d="M2.3 6.5 L18.7 6.5" stroke="#fff4c0" stroke-width="0.8"/><path d="M3 15.2 H18" stroke="#c89030" stroke-width="0.9"/></svg>
<div class="a ui" style="left:356px;top:676.1px;color:#1a1a1a;transform:scaleX(0.955);transform-origin:0 0">Version Info</div>
<svg class="a" style="left:310px;top:699.8px" width="12" height="12"><rect x="0.5" y="0.5" width="11" height="11" rx="1.5" fill="#f6f6f8" stroke="#a8a8a8"/><path d="M3 6h6" stroke="#4a5ab0" stroke-width="1.4"/></svg>
<div class="a" style="left:322px;top:705.8px;width:8px;height:0;border-top:1px dotted #909090"></div>
<svg class="a" style="left:329.5px;top:696.3px" width="22" height="18" viewBox="0 0 21 17"><path d="M1.5 3.5 Q1.5 1 4 1 L8 1 L10 3 L17 3 Q19.5 3 19.5 5.5 L19.5 14 Q19.5 16 17.5 16 L3.5 16 Q1.5 16 1.5 14Z" fill="#e8b848" stroke="#b88420" stroke-width="1.1"/><path d="M2.3 6.5 L18.7 6.5 L18.7 14 Q18.7 15.2 17.5 15.2 L3.5 15.2 Q2.3 15.2 2.3 14Z" fill="#fbe27a"/><path d="M2.3 6.5 L18.7 6.5" stroke="#fff4c0" stroke-width="0.8"/><path d="M3 15.2 H18" stroke="#c89030" stroke-width="0.9"/></svg>
<div class="a ui" style="left:356px;top:697.4px;color:#1a1a1a;transform:scaleX(0.955);transform-origin:0 0">20</div>
<div class="a" style="left:341px;top:727.0px;width:14px;height:0;border-top:1px dotted #909090"></div>
<svg class="a" style="left:355px;top:717.55px" width="22" height="18" viewBox="0 0 21 17"><path d="M1.5 3.5 Q1.5 1 4 1 L8 1 L10 3 L17 3 Q19.5 3 19.5 5.5 L19.5 14 Q19.5 16 17.5 16 L3.5 16 Q1.5 16 1.5 14Z" fill="#e8b848" stroke="#b88420" stroke-width="1.1"/><path d="M2.3 6.5 L18.7 6.5 L18.7 14 Q18.7 15.2 17.5 15.2 L3.5 15.2 Q2.3 15.2 2.3 14Z" fill="#fbe27a"/><path d="M2.3 6.5 L18.7 6.5" stroke="#fff4c0" stroke-width="0.8"/><path d="M3 15.2 H18" stroke="#c89030" stroke-width="0.9"/></svg>
<div class="a ui" style="left:382px;top:718.6px;color:#1a1a1a;transform:scaleX(0.955);transform-origin:0 0">"DENGE2VONVO1" - [lang:</div>
<svg class="a" style="left:310px;top:742.3px" width="12" height="12"><rect x="0.5" y="0.5" width="11" height="11" rx="1.5" fill="#f6f6f8" stroke="#a8a8a8"/><path d="M3 6h6" stroke="#4a5ab0" stroke-width="1.4"/></svg>
<div class="a" style="left:322px;top:748.3px;width:8px;height:0;border-top:1px dotted #909090"></div>
<svg class="a" style="left:329.5px;top:738.8px" width="22" height="18" viewBox="0 0 21 17"><path d="M1.5 3.5 Q1.5 1 4 1 L8 1 L10 3 L17 3 Q19.5 3 19.5 5.5 L19.5 14 Q19.5 16 17.5 16 L3.5 16 Q1.5 16 1.5 14Z" fill="#e8b848" stroke="#b88420" stroke-width="1.1"/><path d="M2.3 6.5 L18.7 6.5 L18.7 14 Q18.7 15.2 17.5 15.2 L3.5 15.2 Q2.3 15.2 2.3 14Z" fill="#fbe27a"/><path d="M2.3 6.5 L18.7 6.5" stroke="#fff4c0" stroke-width="0.8"/><path d="M3 15.2 H18" stroke="#c89030" stroke-width="0.9"/></svg>
<div class="a ui" style="left:356px;top:739.9px;color:#1a1a1a;transform:scaleX(0.955);transform-origin:0 0">22</div>
<div class="a" style="left:341px;top:769.5px;width:14px;height:0;border-top:1px dotted #909090"></div>
<svg class="a" style="left:355px;top:760.05px" width="22" height="18" viewBox="0 0 21 17"><path d="M1.5 3.5 Q1.5 1 4 1 L8 1 L10 3 L17 3 Q19.5 3 19.5 5.5 L19.5 14 Q19.5 16 17.5 16 L3.5 16 Q1.5 16 1.5 14Z" fill="#e8b848" stroke="#b88420" stroke-width="1.1"/><path d="M2.3 6.5 L18.7 6.5 L18.7 14 Q18.7 15.2 17.5 15.2 L3.5 15.2 Q2.3 15.2 2.3 14Z" fill="#fbe27a"/><path d="M2.3 6.5 L18.7 6.5" stroke="#fff4c0" stroke-width="0.8"/><path d="M3 15.2 H18" stroke="#c89030" stroke-width="0.9"/></svg>
<div class="a ui" style="left:382px;top:761.1px;color:#1a1a1a;transform:scaleX(0.955);transform-origin:0 0">"DENGE0" - [lang:0]</div>
<div class="a" style="left:341px;top:790.8px;width:14px;height:0;border-top:1px dotted #909090"></div>
<svg class="a" style="left:355px;top:781.3px" width="22" height="18" viewBox="0 0 21 17"><path d="M1.5 3.5 Q1.5 1 4 1 L8 1 L10 3 L17 3 Q19.5 3 19.5 5.5 L19.5 14 Q19.5 16 17.5 16 L3.5 16 Q1.5 16 1.5 14Z" fill="#e8b848" stroke="#b88420" stroke-width="1.1"/><path d="M2.3 6.5 L18.7 6.5 L18.7 14 Q18.7 15.2 17.5 15.2 L3.5 15.2 Q2.3 15.2 2.3 14Z" fill="#fbe27a"/><path d="M2.3 6.5 L18.7 6.5" stroke="#fff4c0" stroke-width="0.8"/><path d="M3 15.2 H18" stroke="#c89030" stroke-width="0.9"/></svg>
<div class="a ui" style="left:382px;top:782.4px;color:#1a1a1a;transform:scaleX(0.955);transform-origin:0 0">"DENGE1" - [lang:0]</div>
<div class="a" style="left:341px;top:812.0px;width:14px;height:0;border-top:1px dotted #909090"></div>
<svg class="a" style="left:355px;top:802.55px" width="22" height="18" viewBox="0 0 21 17"><path d="M1.5 3.5 Q1.5 1 4 1 L8 1 L10 3 L17 3 Q19.5 3 19.5 5.5 L19.5 14 Q19.5 16 17.5 16 L3.5 16 Q1.5 16 1.5 14Z" fill="#e8b848" stroke="#b88420" stroke-width="1.1"/><path d="M2.3 6.5 L18.7 6.5 L18.7 14 Q18.7 15.2 17.5 15.2 L3.5 15.2 Q2.3 15.2 2.3 14Z" fill="#fbe27a"/><path d="M2.3 6.5 L18.7 6.5" stroke="#fff4c0" stroke-width="0.8"/><path d="M3 15.2 H18" stroke="#c89030" stroke-width="0.9"/></svg>
<div class="a ui" style="left:382px;top:803.6px;color:#1a1a1a;transform:scaleX(0.955);transform-origin:0 0">"DENGE2" - [lang:0]</div>
<div class="a" style="left:341px;top:833.3px;width:14px;height:0;border-top:1px dotted #909090"></div>
<svg class="a" style="left:355px;top:823.8px" width="22" height="18" viewBox="0 0 21 17"><path d="M1.5 3.5 Q1.5 1 4 1 L8 1 L10 3 L17 3 Q19.5 3 19.5 5.5 L19.5 14 Q19.5 16 17.5 16 L3.5 16 Q1.5 16 1.5 14Z" fill="#e8b848" stroke="#b88420" stroke-width="1.1"/><path d="M2.3 6.5 L18.7 6.5 L18.7 14 Q18.7 15.2 17.5 15.2 L3.5 15.2 Q2.3 15.2 2.3 14Z" fill="#fbe27a"/><path d="M2.3 6.5 L18.7 6.5" stroke="#fff4c0" stroke-width="0.8"/><path d="M3 15.2 H18" stroke="#c89030" stroke-width="0.9"/></svg>
<div class="a ui" style="left:382px;top:824.9px;color:#1a1a1a;transform:scaleX(0.955);transform-origin:0 0">"DENGE3" - [lang:0]</div>
<div class="a" style="left:341px;top:854.5px;width:14px;height:0;border-top:1px dotted #909090"></div>
<svg class="a" style="left:355px;top:845.05px" width="22" height="18" viewBox="0 0 21 17"><path d="M1.5 3.5 Q1.5 1 4 1 L8 1 L10 3 L17 3 Q19.5 3 19.5 5.5 L19.5 14 Q19.5 16 17.5 16 L3.5 16 Q1.5 16 1.5 14Z" fill="#e8b848" stroke="#b88420" stroke-width="1.1"/><path d="M2.3 6.5 L18.7 6.5 L18.7 14 Q18.7 15.2 17.5 15.2 L3.5 15.2 Q2.3 15.2 2.3 14Z" fill="#fbe27a"/><path d="M2.3 6.5 L18.7 6.5" stroke="#fff4c0" stroke-width="0.8"/><path d="M3 15.2 H18" stroke="#c89030" stroke-width="0.9"/></svg>
<div class="a ui" style="left:382px;top:846.1px;color:#1a1a1a;transform:scaleX(0.955);transform-origin:0 0">"DENGE4" - [lang:0]</div>
<div class="a" style="left:567px;top:534px;width:1.5px;height:37px;background:#a8a8a8"></div>
<div class="a" style="left:729.5px;top:534px;width:1.5px;height:37px;background:#a8a8a8"></div>
<svg class="a" style="left:592px;top:541px" width="22" height="24"><path d="M1.5 1 H10.5 L13.5 4 V16.5 H1.5Z" fill="#9ab4d8" stroke="#4a5c98"/><path d="M1.5 1 H10.5 V5 H1.5Z" fill="#c8ccd8"/><path d="M7.5 6.5 H17 L20.5 10 V22.5 H7.5Z" fill="#8eaedc" stroke="#3e4e90" stroke-width="1.2"/><path d="M8 7 H16.5 V11 H8Z" fill="#c4c8d4"/><path d="M9.5 14h9M9.5 17h9M9.5 20h9" stroke="#b8cce8" stroke-width="0.8"/></svg>
<svg class="a" style="left:642px;top:541px" width="22" height="24"><path d="M1.5 2 H17 V19.5 H1.5Z" fill="#d8c050" stroke="#b08a20"/><rect x="5" y="0.5" width="9" height="3.5" fill="#7a7e88"/><path d="M8.5 6.5 H17 L20 9.5 V21.5 H8.5Z" fill="#9eb8dc" stroke="#4a5c98" stroke-width="1.2"/><path d="M10 12h8M10 15h8M10 18h8" stroke="#c8d8ee" stroke-width="0.8"/></svg>
<svg class="a" style="left:689px;top:541px" width="24" height="24"><rect x="1" y="5" width="15" height="12" fill="#9098a8" stroke="#505868"/><rect x="3" y="7" width="10.5" height="8" fill="#0a2a98"/><path d="M13 1.5 H21 M17 1.5 V21.5 M13 21.5 H21" stroke="#3a3e50" stroke-width="2.2"/><path d="M17 2 V21" stroke="#8a8ea8" stroke-width="1"/></svg>
<svg class="a" style="left:748px;top:542px" width="25" height="21"><path d="M15 6 Q8 3 5 8 Q2.5 13 7 16.5 Q9.5 18.5 11 17" stroke="#0a2a98" stroke-width="5" fill="none" stroke-linecap="round"/><path d="M12.5 1.5 L23 1 L23 13 Z" fill="#0a2a98"/><path d="M8 9 Q10 6.5 13 7.5" stroke="#4a7ad8" stroke-width="1.2" fill="none"/></svg>
<svg class="a" style="left:797px;top:541px" width="23" height="23"><rect x="7.5" y="1" width="13.5" height="13.5" rx="4" fill="#a8c8d8" stroke="#4a5e98" stroke-width="1.4"/><path d="M10 5 Q12 3 15 4" stroke="#e0f0f8" stroke-width="1.2" fill="none"/><path d="M9.5 13 L2 19.5" stroke="#c87a28" stroke-width="3.4" stroke-linecap="round"/></svg>
<svg class="a" style="left:846px;top:542px" width="20" height="21"><g stroke-width="2.2"><path d="M1 2h10M1 6h9M1 10h4M1 14h9M1 18h4" stroke="#5a3ab8"/><path d="M13.5 2h4.5M11.5 6h3.5M7.5 10h9M11.5 14h6.5M6 18h9" stroke="#d8683a"/></g></svg>
<div class="a" style="left:559px;top:582px;width:835px;height:281px;background:#fff;border-left:1.5px solid #3a3a3a;border-top:1.5px solid #3a3a3a;border-right:1.5px solid #3a3a3a"></div>
<div class="a" style="left:561px;top:604.5px;width:832px;height:2.5px;background:#9a9a9a"></div>
<div class="a" style="left:659px;top:583px;width:1.5px;height:280px;background:#3a3a3a"></div>
<div class="a" style="left:1192.5px;top:583px;width:1.5px;height:280px;background:#3a3a3a"></div>
<div class="a mono hx" style="left:572px;top:589.2px;color:#2a2af0">Offset</div>
<div class="a mono hx" style="left:681.4px;top:589.2px;color:#2a2af0">0  1  2  3  4  5  6  7  8  9  A  B  C  D  E  F</div>
<div class="a mono hx" style="left:1214px;top:589.2px;color:#2a2af0">Ascii</div>
<div class="a" style="left:925.9px;top:642.1px;width:245.3px;height:17.5px;background:#000"></div>
<div class="a" style="left:669.9px;top:659.4px;width:85.3px;height:17px;background:#000"></div>
<div class="a" style="left:1286.5px;top:642.1px;width:85.4px;height:17.5px;background:#000"></div>
<div class="a" style="left:1201.1px;top:659.4px;width:32.0px;height:17px;background:#000"></div>
<div class="a mono hx" style="left:565.8px;top:609.1px;color:#2a2af0">00002A90</div>
<div class="a mono hx" style="left:670.7px;top:609.1px;color:#383838">07 07 07 07 07 07 07 07 07 07 07 07 07 07 07 07</div>
<div class="a mono hx" style="left:565.8px;top:626.4px;color:#2a2af0">00002AA0</div>
<div class="a mono hx" style="left:670.7px;top:626.4px;color:#383838">07 07 07 07 07 07 07 07 07 07 07 07 07 07 07 07</div>
<div class="a mono hx" style="left:565.8px;top:643.7px;color:#2a2af0">00002AB0</div>
<div class="a mono hx" style="left:670.7px;top:643.7px;color:#383838"><span>07 07 07 07 07 07 07 07 </span><span style="color:#fff">32 6F EE EE DE 76 DE 13</span></div>
<div class="a mono hx" style="left:565.8px;top:661.0px;color:#2a2af0">00002AC0</div>
<div class="a mono hx" style="left:670.7px;top:661.0px;color:#383838"><span style="color:#fff">6F 13 32</span><span> 55 8B EC 81 EC EC 0A 00 00 C7 85 80 FD</span></div>
<div class="a mono hx" style="left:565.8px;top:678.3px;color:#2a2af0">00002AD0</div>
<div class="a mono hx" style="left:670.7px;top:678.3px;color:#383838">FF FF 00 00 00 00 E8 00 00 00 00 B8 02 00 00 00</div>
<div class="a mono hx" style="left:565.8px;top:695.6px;color:#2a2af0">00002AE0</div>
<div class="a mono hx" style="left:670.7px;top:695.6px;color:#383838">58 89 85 80 FD FF FF 56 81 E6 3B 5C 00 00 E8 0A</div>
<div class="a mono hx" style="left:565.8px;top:712.9px;color:#2a2af0">00002AF0</div>
<div class="a mono hx" style="left:670.7px;top:712.9px;color:#383838">00 00 00 00 37 3A 35 41 3E 38 46 32 46 83 C4 04</div>
<div class="a mono hx" style="left:565.8px;top:730.2px;color:#2a2af0">00002B00</div>
<div class="a mono hx" style="left:670.7px;top:730.2px;color:#383838">81 CE 33 FE 00 00 5E 57 57 83 C4 04 81 F7 A2 31</div>
<div class="a mono hx" style="left:565.8px;top:747.5px;color:#2a2af0">00002B10</div>
<div class="a mono hx" style="left:670.7px;top:747.5px;color:#383838">00 00 81 C7 CF 96 00 00 5F C6 85 18 FC FF FF 52</div>
<div class="a mono hx" style="left:565.8px;top:764.8px;color:#2a2af0">00002B20</div>
<div class="a mono hx" style="left:670.7px;top:764.8px;color:#383838">C6 85 19 FC FF FF B9 C6 85 1A FC FF FF 10 C6 85</div>
<div class="a mono hx" style="left:565.8px;top:782.1px;color:#2a2af0">00002B30</div>
<div class="a mono hx" style="left:670.7px;top:782.1px;color:#383838">1B FC FF FF 10 C6 85 1C FC FF FF 10 C6 85 1D FC</div>
<div class="a mono hx" style="left:565.8px;top:799.4px;color:#2a2af0">00002B40</div>
<div class="a mono hx" style="left:670.7px;top:799.4px;color:#383838">FF FF 10 C6 85 1E FC FF FF 5A 53 E8 08 00 00 00</div>
<div class="a mono hx" style="left:565.8px;top:816.7px;color:#2a2af0">00002B50</div>
<div class="a mono hx" style="left:670.7px;top:816.7px;color:#383838">00 32 42 37 3A 3B 41 48 83 C4 04 81 E3 C0 E4 00</div>
<div class="a mono hx" style="left:565.8px;top:834.0px;color:#2a2af0">00002B60</div>
<div class="a mono hx" style="left:670.7px;top:834.0px;color:#383838">00 81 E3 A7 D1 00 00 5B 53 50 83 C4 04 81 C3 41</div>
<div class="a mono hx" style="left:565.8px;top:851.3px;color:#2a2af0">00002B70</div>
<div class="a mono hx" style="left:670.7px;top:851.3px;color:#383838">DD 00 00 5B 57 81 EF 95 20 01 00 5F C6 85 10 FC</div>
<div class="a" style="left:1202.9px;top:611.5px;width:6.3px;height:11px;border:1.3px solid #705a50;border-left-color:#c08060;border-radius:1px;background:linear-gradient(to right,#c8e8f4 50%,#e8b070 50%)"></div>
<div class="a" style="left:1213.6px;top:611.5px;width:6.3px;height:11px;border:1.3px solid #705a50;border-left-color:#c08060;border-radius:1px;background:linear-gradient(to right,#c8e8f4 50%,#e8b070 50%)"></div>
<div class="a" style="left:1224.2px;top:611.5px;width:6.3px;height:11px;border:1.3px solid #705a50;border-left-color:#c08060;border-radius:1px;background:linear-gradient(to right,#c8e8f4 50%,#e8b070 50%)"></div>
<div class="a" style="left:1234.9px;top:611.5px;width:6.3px;height:11px;border:1.3px solid #705a50;border-left-color:#c08060;border-radius:1px;background:linear-gradient(to right,#c8e8f4 50%,#e8b070 50%)"></div>
<div class="a" style="left:1245.6px;top:611.5px;width:6.3px;height:11px;border:1.3px solid #705a50;border-left-color:#c08060;border-radius:1px;background:linear-gradient(to right,#c8e8f4 50%,#e8b070 50%)"></div>
<div class="a" style="left:1256.2px;top:611.5px;width:6.3px;height:11px;border:1.3px solid #705a50;border-left-color:#c08060;border-radius:1px;background:linear-gradient(to right,#c8e8f4 50%,#e8b070 50%)"></div>
<div class="a" style="left:1266.9px;top:611.5px;width:6.3px;height:11px;border:1.3px solid #705a50;border-left-color:#c08060;border-radius:1px;background:linear-gradient(to right,#c8e8f4 50%,#e8b070 50%)"></div>
<div class="a" style="left:1277.6px;top:611.5px;width:6.3px;height:11px;border:1.3px solid #705a50;border-left-color:#c08060;border-radius:1px;background:linear-gradient(to right,#c8e8f4 50%,#e8b070 50%)"></div>
<div class="a" style="left:1288.3px;top:611.5px;width:6.3px;height:11px;border:1.3px solid #705a50;border-left-color:#c08060;border-radius:1px;background:linear-gradient(to right,#c8e8f4 50%,#e8b070 50%)"></div>
<div class="a" style="left:1298.9px;top:611.5px;width:6.3px;height:11px;border:1.3px solid #705a50;border-left-color:#c08060;border-radius:1px;background:linear-gradient(to right,#c8e8f4 50%,#e8b070 50%)"></div>
<div class="a" style="left:1309.6px;top:611.5px;width:6.3px;height:11px;border:1.3px solid #705a50;border-left-color:#c08060;border-radius:1px;background:linear-gradient(to right,#c8e8f4 50%,#e8b070 50%)"></div>
<div class="a" style="left:1320.3px;top:611.5px;width:6.3px;height:11px;border:1.3px solid #705a50;border-left-color:#c08060;border-radius:1px;background:linear-gradient(to right,#c8e8f4 50%,#e8b070 50%)"></div>
<div class="a" style="left:1330.9px;top:611.5px;width:6.3px;height:11px;border:1.3px solid #705a50;border-left-color:#c08060;border-radius:1px;background:linear-gradient(to right,#c8e8f4 50%,#e8b070 50%)"></div>
<div class="a" style="left:1341.6px;top:611.5px;width:6.3px;height:11px;border:1.3px solid #705a50;border-left-color:#c08060;border-radius:1px;background:linear-gradient(to right,#c8e8f4 50%,#e8b070 50%)"></div>
<div class="a" style="left:1352.3px;top:611.5px;width:6.3px;height:11px;border:1.3px solid #705a50;border-left-color:#c08060;border-radius:1px;background:linear-gradient(to right,#c8e8f4 50%,#e8b070 50%)"></div>
<div class="a" style="left:1362.9px;top:611.5px;width:6.3px;height:11px;border:1.3px solid #705a50;border-left-color:#c08060;border-radius:1px;background:linear-gradient(to right,#c8e8f4 50%,#e8b070 50%)"></div>
<div class="a mono hx" style="left:1201.6px;top:609.1px;color:#383838">                </div>
<div class="a" style="left:1202.9px;top:628.8px;width:6.3px;height:11px;border:1.3px solid #705a50;border-left-color:#c08060;border-radius:1px;background:linear-gradient(to right,#c8e8f4 50%,#e8b070 50%)"></div>
<div class="a" style="left:1213.6px;top:628.8px;width:6.3px;height:11px;border:1.3px solid #705a50;border-left-color:#c08060;border-radius:1px;background:linear-gradient(to right,#c8e8f4 50%,#e8b070 50%)"></div>
<div class="a" style="left:1224.2px;top:628.8px;width:6.3px;height:11px;border:1.3px solid #705a50;border-left-color:#c08060;border-radius:1px;background:linear-gradient(to right,#c8e8f4 50%,#e8b070 50%)"></div>
<div class="a" style="left:1234.9px;top:628.8px;width:6.3px;height:11px;border:1.3px solid #705a50;border-left-color:#c08060;border-radius:1px;background:linear-gradient(to right,#c8e8f4 50%,#e8b070 50%)"></div>
<div class="a" style="left:1245.6px;top:628.8px;width:6.3px;height:11px;border:1.3px solid #705a50;border-left-color:#c08060;border-radius:1px;background:linear-gradient(to right,#c8e8f4 50%,#e8b070 50%)"></div>
<div class="a" style="left:1256.2px;top:628.8px;width:6.3px;height:11px;border:1.3px solid #705a50;border-left-color:#c08060;border-radius:1px;background:linear-gradient(to right,#c8e8f4 50%,#e8b070 50%)"></div>
<div class="a" style="left:1266.9px;top:628.8px;width:6.3px;height:11px;border:1.3px solid #705a50;border-left-color:#c08060;border-radius:1px;background:linear-gradient(to right,#c8e8f4 50%,#e8b070 50%)"></div>
<div class="a" style="left:1277.6px;top:628.8px;width:6.3px;height:11px;border:1.3px solid #705a50;border-left-color:#c08060;border-radius:1px;background:linear-gradient(to right,#c8e8f4 50%,#e8b070 50%)"></div>
<div class="a" style="left:1288.3px;top:628.8px;width:6.3px;height:11px;border:1.3px solid #705a50;border-left-color:#c08060;border-radius:1px;background:linear-gradient(to right,#c8e8f4 50%,#e8b070 50%)"></div>
<div class="a" style="left:1298.9px;top:628.8px;width:6.3px;height:11px;border:1.3px solid #705a50;border-left-color:#c08060;border-radius:1px;background:linear-gradient(to right,#c8e8f4 50%,#e8b070 50%)"></div>
<div class="a" style="left:1309.6px;top:628.8px;width:6.3px;height:11px;border:1.3px solid #705a50;border-left-color:#c08060;border-radius:1px;background:linear-gradient(to right,#c8e8f4 50%,#e8b070 50%)"></div>
<div class="a" style="left:1320.3px;top:628.8px;width:6.3px;height:11px;border:1.3px solid #705a50;border-left-color:#c08060;border-radius:1px;background:linear-gradient(to right,#c8e8f4 50%,#e8b070 50%)"></div>
<div class="a" style="left:1330.9px;top:628.8px;width:6.3px;height:11px;border:1.3px solid #705a50;border-left-color:#c08060;border-radius:1px;background:linear-gradient(to right,#c8e8f4 50%,#e8b070 50%)"></div>
<div class="a" style="left:1341.6px;top:628.8px;width:6.3px;height:11px;border:1.3px solid #705a50;border-left-color:#c08060;border-radius:1px;background:linear-gradient(to right,#c8e8f4 50%,#e8b070 50%)"></div>
<div class="a" style="left:1352.3px;top:628.8px;width:6.3px;height:11px;border:1.3px solid #705a50;border-left-color:#c08060;border-radius:1px;background:linear-gradient(to right,#c8e8f4 50%,#e8b070 50%)"></div>
<div class="a" style="left:1362.9px;top:628.8px;width:6.3px;height:11px;border:1.3px solid #705a50;border-left-color:#c08060;border-radius:1px;background:linear-gradient(to right,#c8e8f4 50%,#e8b070 50%)"></div>
<div class="a mono hx" style="left:1201.6px;top:626.4px;color:#383838">                </div>
<div class="a" style="left:1202.9px;top:646.1px;width:6.3px;height:11px;border:1.3px solid #705a50;border-left-color:#c08060;border-radius:1px;background:linear-gradient(to right,#c8e8f4 50%,#e8b070 50%)"></div>
<div class="a" style="left:1213.6px;top:646.1px;width:6.3px;height:11px;border:1.3px solid #705a50;border-left-color:#c08060;border-radius:1px;background:linear-gradient(to right,#c8e8f4 50%,#e8b070 50%)"></div>
<div class="a" style="left:1224.2px;top:646.1px;width:6.3px;height:11px;border:1.3px solid #705a50;border-left-color:#c08060;border-radius:1px;background:linear-gradient(to right,#c8e8f4 50%,#e8b070 50%)"></div>
<div class="a" style="left:1234.9px;top:646.1px;width:6.3px;height:11px;border:1.3px solid #705a50;border-left-color:#c08060;border-radius:1px;background:linear-gradient(to right,#c8e8f4 50%,#e8b070 50%)"></div>
<div class="a" style="left:1245.6px;top:646.1px;width:6.3px;height:11px;border:1.3px solid #705a50;border-left-color:#c08060;border-radius:1px;background:linear-gradient(to right,#c8e8f4 50%,#e8b070 50%)"></div>
<div class="a" style="left:1256.2px;top:646.1px;width:6.3px;height:11px;border:1.3px solid #705a50;border-left-color:#c08060;border-radius:1px;background:linear-gradient(to right,#c8e8f4 50%,#e8b070 50%)"></div>
<div class="a" style="left:1266.9px;top:646.1px;width:6.3px;height:11px;border:1.3px solid #705a50;border-left-color:#c08060;border-radius:1px;background:linear-gradient(to right,#c8e8f4 50%,#e8b070 50%)"></div>
<div class="a" style="left:1277.6px;top:646.1px;width:6.3px;height:11px;border:1.3px solid #705a50;border-left-color:#c08060;border-radius:1px;background:linear-gradient(to right,#c8e8f4 50%,#e8b070 50%)"></div>
<div class="a" style="left:1362.9px;top:646.1px;width:6.3px;height:11px;border:1.3px solid #705a50;border-left-color:#c08060;border-radius:1px;background:linear-gradient(to right,#c8e8f4 50%,#e8b070 50%)"></div>
<div class="a mono hx" style="left:1201.6px;top:643.7px;color:#383838"><span>        </span><span style="color:#fff">2oîîÞvÞ </span></div>
<div class="a" style="left:1213.6px;top:663.4px;width:6.3px;height:11px;border:1.3px solid #705a50;border-left-color:#c08060;border-radius:1px;background:linear-gradient(to right,#c8e8f4 50%,#e8b070 50%)"></div>
<div class="a" style="left:1247.3px;top:663.1px;width:4.5px;height:12px;background:#111"></div>
<div class="a" style="left:1343.3px;top:663.1px;width:4.5px;height:12px;background:#111"></div>
<div class="a" style="left:1354.0px;top:663.1px;width:4.5px;height:12px;background:#111"></div>
<div class="a mono hx" style="left:1201.6px;top:661.0px;color:#383838"><span style="color:#fff">o 2</span><span>U ì ìì...Ç  ý</span></div>
<div class="a mono hx" style="left:1201.6px;top:678.3px;color:#383838">ÿÿ....è....¸ ...</div>
<div class="a" style="left:1215.3px;top:697.7px;width:4.5px;height:12px;background:#111"></div>
<div class="a" style="left:1225.9px;top:697.7px;width:4.5px;height:12px;background:#111"></div>
<div class="a" style="left:1236.6px;top:697.7px;width:4.5px;height:12px;background:#111"></div>
<div class="a mono hx" style="left:1201.6px;top:695.6px;color:#383838">X   ýÿÿV æ;\..è.</div>
<div class="a" style="left:1343.3px;top:715.0px;width:4.5px;height:12px;background:#111"></div>
<div class="a" style="left:1362.9px;top:715.3px;width:6.3px;height:11px;border:1.3px solid #705a50;border-left-color:#c08060;border-radius:1px;background:linear-gradient(to right,#c8e8f4 50%,#e8b070 50%)"></div>
<div class="a mono hx" style="left:1201.6px;top:712.9px;color:#383838">....7:5A&gt;8F2F Ä </div>
<div class="a" style="left:1300.6px;top:732.3px;width:4.5px;height:12px;background:#111"></div>
<div class="a" style="left:1320.3px;top:732.6px;width:6.3px;height:11px;border:1.3px solid #705a50;border-left-color:#c08060;border-radius:1px;background:linear-gradient(to right,#c8e8f4 50%,#e8b070 50%)"></div>
<div class="a mono hx" style="left:1201.6px;top:730.2px;color:#383838"> Î3þ..^WW Ä  ÷¢1</div>
<div class="a" style="left:1257.9px;top:749.6px;width:4.5px;height:12px;background:#111"></div>
<div class="a" style="left:1311.3px;top:749.6px;width:4.5px;height:12px;background:#111"></div>
<div class="a" style="left:1320.3px;top:749.9px;width:6.3px;height:11px;border:1.3px solid #705a50;border-left-color:#c08060;border-radius:1px;background:linear-gradient(to right,#c8e8f4 50%,#e8b070 50%)"></div>
<div class="a mono hx" style="left:1201.6px;top:747.5px;color:#383838">.. ÇÏ .._Æ  üÿÿR</div>
<div class="a" style="left:1215.3px;top:766.9px;width:4.5px;height:12px;background:#111"></div>
<div class="a" style="left:1224.2px;top:767.2px;width:6.3px;height:11px;border:1.3px solid #705a50;border-left-color:#c08060;border-radius:1px;background:linear-gradient(to right,#c8e8f4 50%,#e8b070 50%)"></div>
<div class="a" style="left:1290.0px;top:766.9px;width:4.5px;height:12px;background:#111"></div>
<div class="a" style="left:1298.9px;top:767.2px;width:6.3px;height:11px;border:1.3px solid #705a50;border-left-color:#c08060;border-radius:1px;background:linear-gradient(to right,#c8e8f4 50%,#e8b070 50%)"></div>
<div class="a" style="left:1341.6px;top:767.2px;width:6.3px;height:11px;border:1.3px solid #705a50;border-left-color:#c08060;border-radius:1px;background:linear-gradient(to right,#c8e8f4 50%,#e8b070 50%)"></div>
<div class="a" style="left:1364.6px;top:766.9px;width:4.5px;height:12px;background:#111"></div>
<div class="a mono hx" style="left:1201.6px;top:764.8px;color:#383838">Æ  üÿÿ¹Æ  üÿÿ Æ </div>
<div class="a" style="left:1202.9px;top:784.5px;width:6.3px;height:11px;border:1.3px solid #705a50;border-left-color:#c08060;border-radius:1px;background:linear-gradient(to right,#c8e8f4 50%,#e8b070 50%)"></div>
<div class="a" style="left:1245.6px;top:784.5px;width:6.3px;height:11px;border:1.3px solid #705a50;border-left-color:#c08060;border-radius:1px;background:linear-gradient(to right,#c8e8f4 50%,#e8b070 50%)"></div>
<div class="a" style="left:1268.6px;top:784.2px;width:4.5px;height:12px;background:#111"></div>
<div class="a" style="left:1320.3px;top:784.5px;width:6.3px;height:11px;border:1.3px solid #705a50;border-left-color:#c08060;border-radius:1px;background:linear-gradient(to right,#c8e8f4 50%,#e8b070 50%)"></div>
<div class="a" style="left:1343.3px;top:784.2px;width:4.5px;height:12px;background:#111"></div>
<div class="a mono hx" style="left:1201.6px;top:782.1px;color:#383838"> üÿÿ Æ  üÿÿ Æ  ü</div>
<div class="a" style="left:1224.2px;top:801.8px;width:6.3px;height:11px;border:1.3px solid #705a50;border-left-color:#c08060;border-radius:1px;background:linear-gradient(to right,#c8e8f4 50%,#e8b070 50%)"></div>
<div class="a" style="left:1247.3px;top:801.5px;width:4.5px;height:12px;background:#111"></div>
<div class="a" style="left:1330.9px;top:801.8px;width:6.3px;height:11px;border:1.3px solid #705a50;border-left-color:#c08060;border-radius:1px;background:linear-gradient(to right,#c8e8f4 50%,#e8b070 50%)"></div>
<div class="a mono hx" style="left:1201.6px;top:799.4px;color:#383838">ÿÿ Æ  üÿÿZSè ...</div>
<div class="a" style="left:1290.0px;top:818.8px;width:4.5px;height:12px;background:#111"></div>
<div class="a" style="left:1309.6px;top:819.1px;width:6.3px;height:11px;border:1.3px solid #705a50;border-left-color:#c08060;border-radius:1px;background:linear-gradient(to right,#c8e8f4 50%,#e8b070 50%)"></div>
<div class="a mono hx" style="left:1201.6px;top:816.7px;color:#383838">.2B7:;AH Ä  ãÀä.</div>
<div class="a" style="left:1311.3px;top:836.1px;width:4.5px;height:12px;background:#111"></div>
<div class="a" style="left:1330.9px;top:836.4px;width:6.3px;height:11px;border:1.3px solid #705a50;border-left-color:#c08060;border-radius:1px;background:linear-gradient(to right,#c8e8f4 50%,#e8b070 50%)"></div>
<div class="a mono hx" style="left:1201.6px;top:834.0px;color:#383838">. ã§Ñ..[SP Ä  ÃA</div>
<div class="a" style="left:1279.3px;top:853.4px;width:4.5px;height:12px;background:#111"></div>
<div class="a" style="left:1298.9px;top:853.7px;width:6.3px;height:11px;border:1.3px solid #705a50;border-left-color:#c08060;border-radius:1px;background:linear-gradient(to right,#c8e8f4 50%,#e8b070 50%)"></div>
<div class="a" style="left:1343.3px;top:853.4px;width:4.5px;height:12px;background:#111"></div>
<div class="a" style="left:1352.3px;top:853.7px;width:6.3px;height:11px;border:1.3px solid #705a50;border-left-color:#c08060;border-radius:1px;background:linear-gradient(to right,#c8e8f4 50%,#e8b070 50%)"></div>
<div class="a mono hx" style="left:1201.6px;top:851.3px;color:#383838">Ý..[W ï   ._Æ  ü</div>
<div class="a" style="left:0;top:863px;width:1431px;height:5px;background:#fff"></div>
<svg class="a" style="left:1240px;top:305px" width="170" height="105">
<text x="10.5" y="26" font-family="Liberation Sans" font-size="23.5" fill="#0a5ad0" stroke="#0a5ad0" stroke-width="0.6" textLength="77" lengthAdjust="spacingAndGlyphs">Sophos</text>
<path d="M15.10 30.8 H20.20 L65.00 97.8 H59.90ZM24.50 30.8 H29.60 L74.40 97.8 H69.30ZM33.90 30.8 H39.00 L83.80 97.8 H78.70Z" fill="#0a5ad0"/>
<path d="M59.9 30.8 H83.3 L38.1 97.8 H15.1Z" fill="#0a5ad0"/>
<path d="M69.7 60.3 H83.3 L80.8 64.5 H67.1Z" fill="#0a5ad0"/>
<text x="86" y="76.8" font-family="Liberation Sans" font-size="47.5" fill="#0a5ad0" stroke="#0a5ad0" stroke-width="1.3" textLength="73.5" lengthAdjust="spacingAndGlyphs">Ops</text>
</svg>
</body></html>
